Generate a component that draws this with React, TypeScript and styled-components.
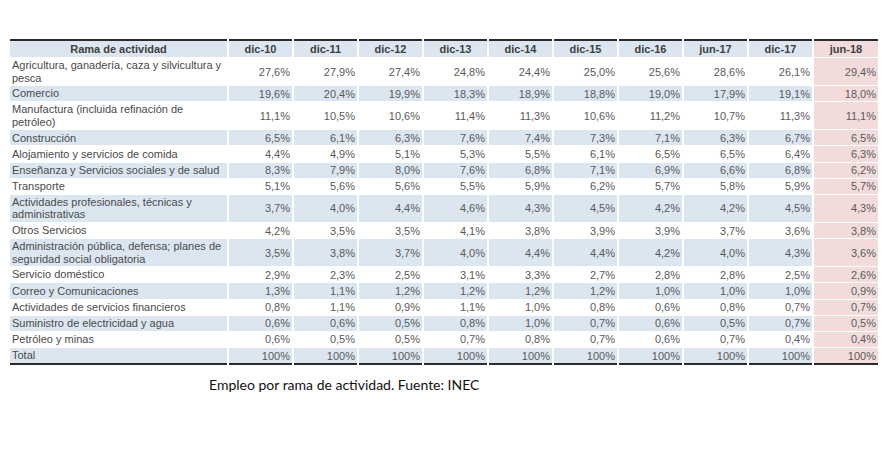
import styled, { createGlobalStyle } from 'styled-components';

const GlobalStyle = createGlobalStyle`
	html, body {
		margin: 0;
		padding: 0;
		background: #fff;
	}
`;

const columns = ['dic-10', 'dic-11', 'dic-12', 'dic-13', 'dic-14', 'dic-15', 'dic-16', 'jun-17', 'dic-17', 'jun-18'];

const rows: { name: string; values: string[] }[] = [
	{ name: 'Agricultura, ganadería, caza y silvicultura y pesca', values: ['27,6%', '27,9%', '27,4%', '24,8%', '24,4%', '25,0%', '25,6%', '28,6%', '26,1%', '29,4%'] },
	{ name: 'Comercio', values: ['19,6%', '20,4%', '19,9%', '18,3%', '18,9%', '18,8%', '19,0%', '17,9%', '19,1%', '18,0%'] },
	{ name: 'Manufactura (incluida refinación de petróleo)', values: ['11,1%', '10,5%', '10,6%', '11,4%', '11,3%', '10,6%', '11,2%', '10,7%', '11,3%', '11,1%'] },
	{ name: 'Construcción', values: ['6,5%', '6,1%', '6,3%', '7,6%', '7,4%', '7,3%', '7,1%', '6,3%', '6,7%', '6,5%'] },
	{ name: 'Alojamiento y servicios de comida', values: ['4,4%', '4,9%', '5,1%', '5,3%', '5,5%', '6,1%', '6,5%', '6,5%', '6,4%', '6,3%'] },
	{ name: 'Enseñanza  y Servicios sociales y de salud', values: ['8,3%', '7,9%', '8,0%', '7,6%', '6,8%', '7,1%', '6,9%', '6,6%', '6,8%', '6,2%'] },
	{ name: 'Transporte', values: ['5,1%', '5,6%', '5,6%', '5,5%', '5,9%', '6,2%', '5,7%', '5,8%', '5,9%', '5,7%'] },
	{ name: 'Actividades profesionales, técnicas y administrativas', values: ['3,7%', '4,0%', '4,4%', '4,6%', '4,3%', '4,5%', '4,2%', '4,2%', '4,5%', '4,3%'] },
	{ name: 'Otros Servicios', values: ['4,2%', '3,5%', '3,5%', '4,1%', '3,8%', '3,9%', '3,9%', '3,7%', '3,6%', '3,8%'] },
	{ name: 'Administración pública, defensa; planes de seguridad social obligatoria', values: ['3,5%', '3,8%', '3,7%', '4,0%', '4,4%', '4,4%', '4,2%', '4,0%', '4,3%', '3,6%'] },
	{ name: 'Servicio doméstico', values: ['2,9%', '2,3%', '2,5%', '3,1%', '3,3%', '2,7%', '2,8%', '2,8%', '2,5%', '2,6%'] },
	{ name: 'Correo y Comunicaciones', values: ['1,3%', '1,1%', '1,2%', '1,2%', '1,2%', '1,2%', '1,0%', '1,0%', '1,0%', '0,9%'] },
	{ name: 'Actividades de servicios financieros', values: ['0,8%', '1,1%', '0,9%', '1,1%', '1,0%', '0,8%', '0,6%', '0,8%', '0,7%', '0,7%'] },
	{ name: 'Suministro de electricidad y agua', values: ['0,6%', '0,6%', '0,5%', '0,8%', '1,0%', '0,7%', '0,6%', '0,5%', '0,7%', '0,5%'] },
	{ name: 'Petróleo y minas', values: ['0,6%', '0,5%', '0,5%', '0,7%', '0,8%', '0,7%', '0,6%', '0,7%', '0,4%', '0,4%'] },
	{ name: 'Total', values: ['100%', '100%', '100%', '100%', '100%', '100%', '100%', '100%', '100%', '100%'] },
];

const Page = styled.div`
	padding: 39px 0 0 10px;
	font-family: 'Liberation Sans', Arial, sans-serif;
`;

const Table = styled.table`
	width: 868px;
	border-collapse: collapse;
	table-layout: fixed;
	border-top: 2px solid #2b2b2b;
	border-bottom: 2px solid #2b2b2b;
	font-size: 11px;
	color: #4a4a4a;
`;

const HeadCell = styled.th<{ $highlight?: boolean }>`
	height: 16px;
	padding: 0;
	font-weight: bold;
	text-align: center;
	color: #404040;
	background: ${(p) => (p.$highlight ? '#f2dcdb' : '#dce6f1')};
	border-right: 2px solid #fff;
	border-bottom: 1px solid #fff;
	&:last-child {
		border-right: none;
	}
`;

const Row = styled.tr<{ $shaded: boolean }>`
	td {
		background: ${(p) => (p.$shaded ? '#dce6f1' : '#fff')};
	}
`;

const NameCell = styled.td`
	padding: 1px 2px;
	line-height: 12.5px;
	height: 13.2px;
	text-align: left;
	vertical-align: middle;
	border-right: 2px solid #fff;
	border-bottom: 1px solid #fff;
`;

const ValueCell = styled.td<{ $highlight?: boolean }>`
	padding: 0 2px;
	text-align: right;
	vertical-align: middle;
	color: #5a5a5a;
	border-right: 2px solid #fff;
	border-bottom: 1px solid #fff;
	&& {
		background: ${(p) => (p.$highlight ? '#f2dcdb' : undefined)};
	}
	&:last-child {
		border-right: none;
	}
`;

const Caption = styled.p`
	margin: 11px 0 0 199px;
	font-family: Lato, 'Liberation Sans', sans-serif;
	font-size: 14px;
	color: #111;
`;

export default function App() {
	return (
		<>
			<GlobalStyle />
			<Page>
				<Table>
					<colgroup>
						<col style={{ width: 218 }} />
						{columns.map((c) => (
							<col key={c} style={{ width: 65 }} />
						))}
					</colgroup>
					<thead>
						<tr>
							<HeadCell>Rama de actividad</HeadCell>
							{columns.map((c, i) => (
								<HeadCell key={c} $highlight={i === columns.length - 1}>
									{c}
								</HeadCell>
							))}
						</tr>
					</thead>
					<tbody>
						{rows.map((r, i) => (
							<Row key={r.name} $shaded={i % 2 === 1}>
								<NameCell>{r.name}</NameCell>
								{r.values.map((v, j) => (
									<ValueCell key={j} $highlight={j === r.values.length - 1}>
										{v}
									</ValueCell>
								))}
							</Row>
						))}
					</tbody>
				</Table>
				<Caption>Empleo por rama de actividad. Fuente: INEC</Caption>
			</Page>
		</>
	);
}
